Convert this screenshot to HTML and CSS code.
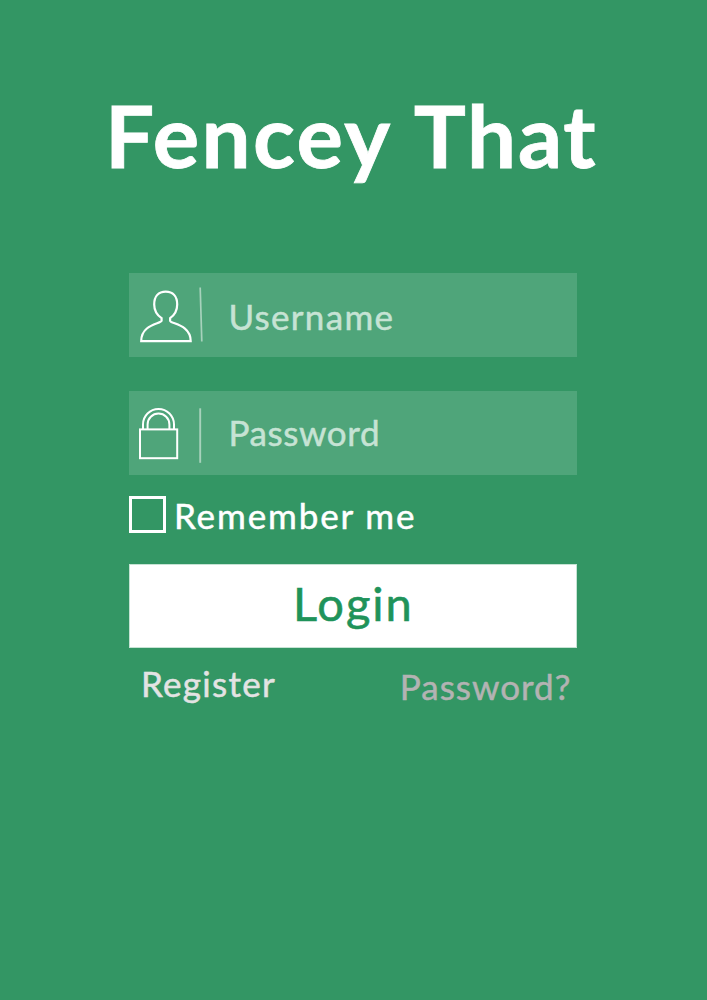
FILE: index.html
```html
<!DOCTYPE html>
<html lang="en">
<head>
<meta charset="utf-8">
<title>Fencey That</title>
<link rel="stylesheet" href="styles.css">
</head>
<body>
<main class="page">
  <h1 class="title">Fencey <span class="title-end">That</span></h1>
  <form class="form">
    <label class="field">
      <svg class="field-icon" width="84" height="84" viewBox="0 0 84 84" fill="none">
        <path d="M36.7 18.7C29.5 18.7 25.2 23.5 25.2 31.5C25.2 37.8 27.9 42 32.6 45.2V47.8C32 51 12.2 51 12.2 68.2H61.7C61.7 51 41.5 51 41.1 47.8V45.2C45.6 42 48.2 37.8 48.2 31.5C48.2 23.5 43.9 18.7 36.7 18.7Z" stroke="#fff" stroke-width="2.2"/>
        <path d="M71.2 14.5L72.8 68.5" stroke="#a7d2bc" stroke-width="1.7"/>
      </svg>
      <input class="input username" type="text" placeholder="Username">
    </label>
    <label class="field">
      <svg class="field-icon" width="84" height="84" viewBox="0 0 84 84" fill="none" stroke="#fff" stroke-width="2">
        <rect x="11" y="38.4" width="37.2" height="28.8"/>
        <path d="M14 38V33.4A15.5 15.5 0 0 1 45 33.4V38M18.6 38V33.4A10.9 10.9 0 0 1 40.4 33.4V38"/>
        <path d="M71.2 17.3V71.8" stroke="#a7d2bc" stroke-width="1.9"/>
      </svg>
      <input class="input password" type="text" placeholder="Password">
    </label>
    <label class="remember">
      <span class="checkbox"></span>
      <span class="remember-text">Remember me</span>
    </label>
    <button class="login" type="button">Login</button>
    <nav class="links">
      <a class="register">Register</a>
      <a class="forgot">Password?</a>
    </nav>
  </form>
</main>
</body>
</html>
```
FILE: styles.css
```css
* { box-sizing: border-box; }
body {
  margin: 0;
  background: #339664;
  color: #fff;
  font-family: Lato, "Open Sans", sans-serif;
}
.page { min-height: 1000px; padding-top: 82px; }
.title {
  margin: 0;
  padding-left: 105px;
  font-size: 87px;
  line-height: 106px;
  font-weight: 700;
  letter-spacing: 2.4px;
  white-space: nowrap;
  -webkit-text-stroke: 0.8px;
}
.title-end { letter-spacing: 1.8px; }
.form {
  width: 448px;
  margin: 85px 0 0 129.4px;
  font-size: 35px;
  -webkit-text-stroke: 0.5px;
}
.field {
  display: flex;
  align-items: center;
  height: 84px;
  margin-bottom: 34px;
  background: #4fa57a;
}
.field-icon { flex: none; }
.input {
  flex: 1;
  min-width: 0;
  height: 50px;
  margin-left: 15px;
  padding: 0;
  border: 0;
  background: none;
  color: #fff;
  font: inherit;
}
.username { padding-top: 2px; letter-spacing: 1.3px; }
.password { padding-bottom: 2px; letter-spacing: 0.6px; }
.input::placeholder { color: #c6e3d4; opacity: 1; }
.remember {
  display: flex;
  height: 55px;
  margin-top: -13px;
}
.checkbox {
  width: 37px;
  height: 37px;
  border: 3px solid #fff;
}
.remember-text {
  margin-left: 7.5px;
  line-height: 39px;
  letter-spacing: 1.9px;
}
.login {
  display: block;
  width: 100%;
  height: 84px;
  margin-top: 13px;
  padding: 0 0 6px;
  border: 1px solid #c6e3d4;
  background: #fff;
  color: #1f935a;
  font: 400 47px/76px Lato, sans-serif;
  letter-spacing: 2px;
  -webkit-text-stroke: 0.6px;
}
.links {
  display: flex;
  justify-content: space-between;
  padding: 14px 6px 0 11.5px;
  line-height: 42px;
  letter-spacing: 1px;
}
.register { letter-spacing: 1.3px; color: #e3e3e3; }
.forgot { margin-top: 3px; color: #b3b3b3; }
```
